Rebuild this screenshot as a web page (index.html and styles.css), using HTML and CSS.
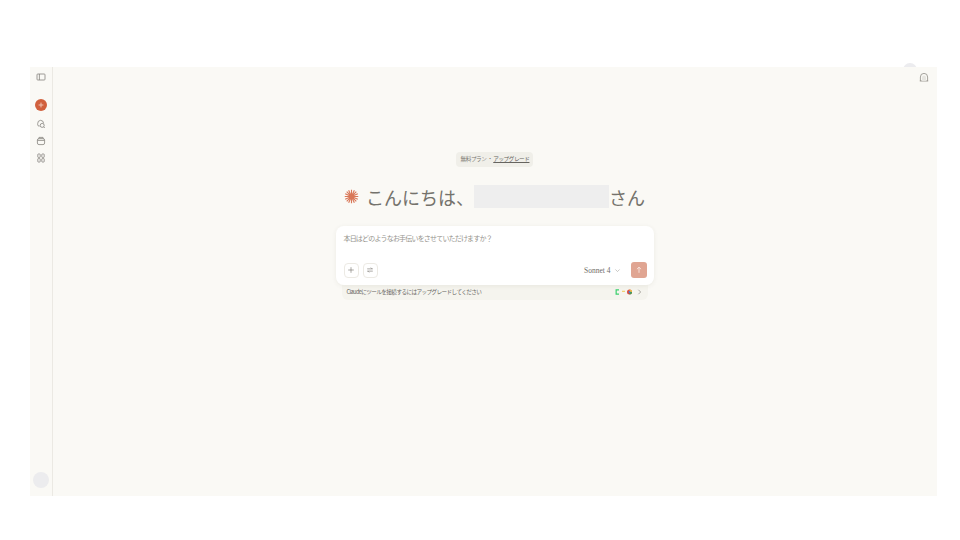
FILE: index.html
```html
<!DOCTYPE html>
<html lang="ja">
<head>
  <meta charset="UTF-8" />
  <title>Claude</title>
  <link rel="stylesheet" href="styles.css">
</head>
<body>
  <div class="app">
    <div class="peek"></div>

    <aside class="sidebar">
      <div class="side-top">
        <svg class="side-icon" viewBox="0 0 10 10"><rect x="1" y="2" width="8" height="6" rx=".8"/><path d="M3.4 2v6"/></svg>
        <div class="side-nav">
          <div class="new-chat"><svg viewBox="0 0 10 10"><path d="M5 2.6v4.8M2.6 5h4.8"/></svg></div>
          <svg class="side-icon" viewBox="0 0 10 10"><path d="M4.6 1.3a3.2 3.2 0 0 0-2.9 3.3v1.2c0 .8.6 1.3 1.3 1.3h.6"/><path d="M4.6 1.3a3.2 3.2 0 0 1 3 3.1"/><circle cx="6.2" cy="6.4" r="2"/><path d="M7.6 7.8 8.8 9"/></svg>
          <svg class="side-icon" viewBox="0 0 10 10"><rect x="1.4" y="2.6" width="7.2" height="6" rx="1.6"/><path d="M2.4 2.6 3 1.4h4l.6 1.2M1.4 4.4h7.2"/></svg>
          <svg class="side-icon" viewBox="0 0 10 10"><rect x="1.8" y="1" width="2.4" height="3.4" rx=".5"/><rect x="5.8" y="1" width="2.4" height="3.4" rx=".5"/><rect x="1.8" y="5.6" width="2.4" height="3.4" rx=".5"/><rect x="5.8" y="5.6" width="2.4" height="3.4" rx=".5"/></svg>
        </div>
      </div>
      <div class="avatar"></div>
    </aside>

    <main class="main">
      <svg class="top-right" viewBox="0 0 10 10"><path d="M.8 9h8.4M1.4 9V5a3.6 3.6 0 0 1 7.2 0v4"/><path class="inner" d="M3 9V5.4a2 2 0 0 1 4 0V9z"/></svg>

      <div class="center">
        <div class="plan">無料プラン ・ <u>アップグレード</u></div>

        <h1 class="greeting">
          <svg class="spark" viewBox="0 0 20 20"><path d="M10 1v18M1 10h18M3.6 3.6l12.8 12.8M16.4 3.6 3.6 16.4M6.2 1.6l7.6 16.8M13.8 1.6 6.2 18.4M1.6 6.2l16.8 7.6M18.4 6.2 1.6 13.8"/></svg>
          <span>こんにちは、</span><span class="name-mask"></span><span>さん</span>
        </h1>

        <div class="composer-wrap">
          <div class="composer">
            <div class="placeholder">本日はどのようなお手伝いをさせていただけますか？</div>
            <div class="composer-row">
              <div class="tools">
                <div class="tool"><svg viewBox="0 0 10 10"><path d="M5 1.5v7M1.5 5h7"/></svg></div>
                <div class="tool"><svg viewBox="0 0 10 10"><path d="M1.5 3.6h7M6 2l1.6 1.6M8.5 6.4h-7M4 8 2.4 6.4"/></svg></div>
              </div>
              <div class="send-group">
                <span class="model">Sonnet 4</span>
                <svg class="chevron" viewBox="0 0 10 10"><path d="M2 3.5 5 6.5 8 3.5"/></svg>
                <div class="send"><svg viewBox="0 0 10 10"><path d="M5 8.5v-7M2.4 4 5 1.5 7.6 4"/></svg></div>
              </div>
            </div>
          </div>
          <div class="connect">
            <span>Claudeにツールを接続するにはアップグレードしてください</span>
            <div class="connect-icons">
              <svg viewBox="0 0 6 8"><path class="g-c" d="M5 1.2H1.2v5.6H5"/></svg>
              <svg viewBox="0 0 6 8"><rect x="0" y="1" width="6" height="6" fill="#f6f4ee"/><rect x="1" y="2.4" width="4" height="1.2" fill="#f2c13c"/></svg>
              <svg viewBox="0 0 6 6"><circle cx="3" cy="3" r="3" fill="#e0483a"/><path d="M3 3V0a3 3 0 0 1 3 3z" fill="#f2c13c"/><path d="M3 3h3a3 3 0 0 1-3 3z" fill="#3f9e55"/><circle cx="3" cy="3" r="1.2" fill="#4a7fdc"/></svg>
              <svg class="more" viewBox="0 0 6 8"><path d="M1.5 1 4.5 4 1.5 7"/></svg>
            </div>
          </div>
        </div>
      </div>
    </main>
  </div>
</body>
</html>
```

FILE: styles.css
```css
html, body { margin: 0; padding: 0; background: #fff }
body { padding: 67px 23px 44px 30px; font-family: "Liberation Serif", "Noto Sans CJK JP", serif; color: #5f5d58 }

.app { display: flex; height: 429px; background: #faf9f5; position: relative }
.peek { position: absolute; top: -4px; right: 20px; width: 14px; height: 14px; border-radius: 50%; background: #ececef; z-index: 0 }

/* サイドバー */
.sidebar { width: 22px; flex: none; border-right: 1px solid #ebe9e3; display: flex; flex-direction: column; justify-content: space-between; align-items: center; padding: 5px 0 8px; position: relative; z-index: 1; background: #faf9f5 }
.side-top { display: flex; flex-direction: column; align-items: center }
.side-nav { display: flex; flex-direction: column; align-items: center; gap: 7px; margin-top: 17px }
.side-icon { width: 10px; height: 10px; fill: none; stroke: #85837d; stroke-width: .8 }
.new-chat { width: 12px; height: 12px; border-radius: 50%; background: #d1603d; display: flex; align-items: center; justify-content: center; margin-bottom: 1px }
.new-chat svg { width: 10px; height: 10px; fill: none; stroke: #f0c4b4; stroke-width: 1 }
.avatar { width: 16px; height: 16px; border-radius: 50%; background: #ececee }

/* メイン */
.main { flex: 1; display: flex; justify-content: center; position: relative; z-index: 1; background: #faf9f5 }
.top-right { position: absolute; top: 5px; right: 8px; width: 10px; height: 10px; fill: none; stroke: #8f8d87; stroke-width: .8 }
.top-right .inner { fill: #e6e5e0; stroke: none }
.center { display: flex; flex-direction: column; align-items: center; padding-top: 85px; margin-right: 1px }

.plan { background: #f0efe9; border-radius: 4px; height: 15px; line-height: 14px; padding: 0 4px 0 5px; font-size: 5.6px; letter-spacing: -.42px; font-family: "Noto Sans CJK JP", sans-serif; color: #7a7872 }
.plan u { color: #66645f }

.greeting { display: flex; align-items: center; margin: 18px 0; height: 23px; font-size: 18px; font-weight: 400; line-height: 22px; font-family: "Noto Sans CJK JP", serif; color: #74726c }
.spark { width: 15px; height: 15px; margin-right: 7px; fill: none; stroke: #d97757; stroke-width: 1.5 }
.name-mask { width: 135px; height: 23px; background: #eeeeee }

.composer-wrap { width: 318px; display: flex; flex-direction: column; align-items: center }
.composer { width: 318px; box-sizing: border-box; height: 59px; background: #fff; border-radius: 8px; box-shadow: 0 1px 5px rgba(60, 50, 30, .07); padding: 7px 7px 7px 8px; display: flex; flex-direction: column; justify-content: space-between; position: relative }
.placeholder { font-size: 7px; line-height: 10px; letter-spacing: -.82px; color: #96948e; font-family: "Noto Sans CJK JP", sans-serif }
.composer-row { display: flex; justify-content: space-between; align-items: center }
.tools { display: flex; gap: 4px }
.tool { width: 15px; height: 15px; box-sizing: border-box; border: 1px solid #eceae4; border-radius: 4px; display: flex; align-items: center; justify-content: center }
.tool svg { width: 8px; height: 8px; fill: none; stroke: #7a7872; stroke-width: .8 }
.send-group { display: flex; align-items: center }
.model { font-size: 7.5px; color: #6f6d68 }
.chevron { width: 7px; height: 7px; margin: 0 10px 0 3px; fill: none; stroke: #a09e98; stroke-width: .8 }
.send { width: 16px; height: 16px; border-radius: 3px; background: #e0a592; display: flex; align-items: center; justify-content: center }
.send svg { width: 8px; height: 8px; fill: none; stroke: #fbeee9; stroke-width: 1 }

.connect { width: 306px; box-sizing: border-box; height: 15px; background: #f5f4ee; border-radius: 0 0 6px 6px; display: flex; justify-content: space-between; align-items: center; padding: 0 6px 2px 5px; font-size: 5.6px; letter-spacing: -.58px; font-family: "Noto Sans CJK JP", sans-serif; color: #66645f }
.connect-icons { display: flex; align-items: center; gap: 1px }
.connect-icons svg { width: 5px; height: 6px; fill: none }
.g-c { stroke: #3ccf6e; stroke-width: 1.6 }
.connect-icons .more { margin-left: 4px; stroke: #8f8d87; stroke-width: 1 }
```
